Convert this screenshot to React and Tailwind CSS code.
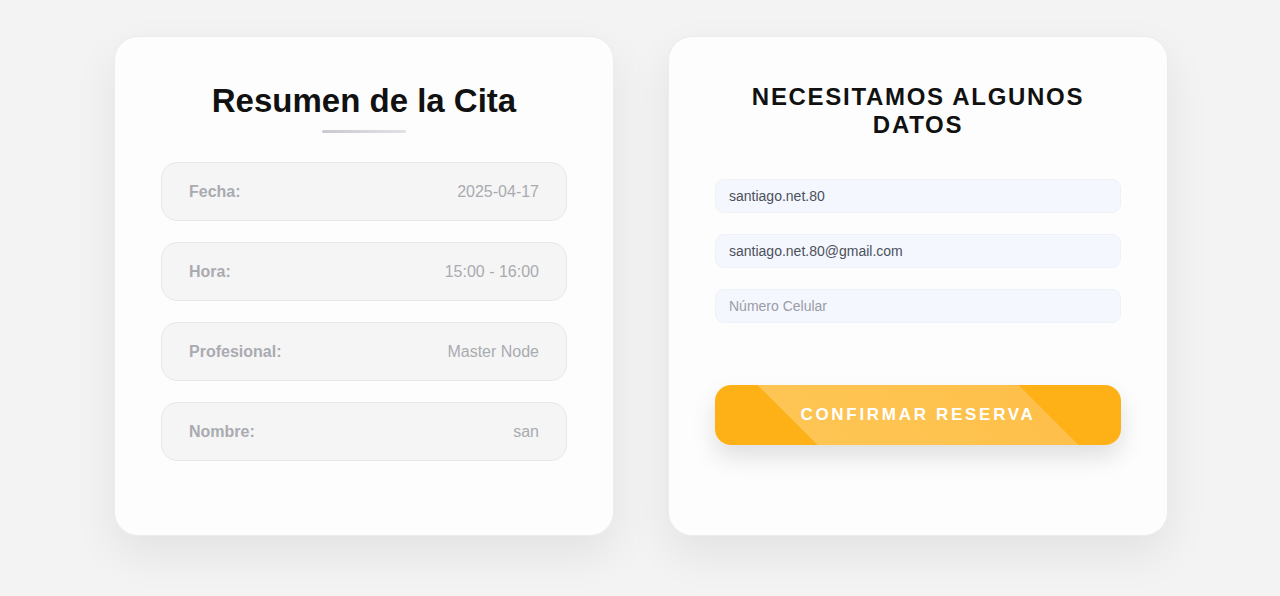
export default function App() {
  const rows = [
    ['Fecha:', '2025-04-17'],
    ['Hora:', '15:00 - 16:00'],
    ['Profesional:', 'Master Node'],
    ['Nombre:', 'san'],
  ];

  return (
    <div
      className="min-h-screen w-full bg-[#f3f3f4] flex justify-center gap-[54px] pt-9 pl-[2px]"
      style={{ fontFamily: '"Liberation Sans", Arial, sans-serif' }}
    >
      {/* RESUMEN */}
      <div className="w-[500px] h-[500px] rounded-[24px] bg-[#fdfdfd] border border-[#ececee] shadow-[0_18px_45px_rgba(0,0,0,0.07)] px-[46px] pt-[44px]">
        <h1 className="text-center text-[33px] leading-10 font-bold text-[#111]">Resumen de la Cita</h1>
        <div className="mx-auto mt-[9px] h-[3px] w-[84px] rounded-full bg-gradient-to-r from-[#c9c9d2] to-[#e2e2e6]" />

        <div className="mt-[29px] flex flex-col gap-[21px]">
          {rows.map(([label, value]) => (
            <div
              key={label}
              className="h-[59px] rounded-[16px] bg-[#f5f5f6] border border-[#e8e8ea] flex items-center justify-between px-[27px]"
            >
              <span className="text-base font-bold text-[#a9abb0]">{label}</span>
              <span className="text-base text-[#a9abaf]">{value}</span>
            </div>
          ))}
        </div>
      </div>

      {/* DATOS */}
      <div className="w-[500px] h-[500px] rounded-[24px] bg-[#fdfdfd] border border-[#ececee] shadow-[0_18px_45px_rgba(0,0,0,0.07)] px-[46px] pt-[46px]">
        <h2 className="text-center text-[24px] leading-7 font-bold uppercase tracking-[1.7px] text-[#111]">
          Necesitamos algunos datos
        </h2>

        <div className="mt-[40px] flex flex-col gap-[21px]">
          <input
            defaultValue="santiago.net.80"
            className="h-[34px] w-full rounded-[9px] bg-[#f4f7fe] border border-[#eef1f8] px-[13px] text-sm text-[#4b505a] outline-none"
          />
          <input
            defaultValue="santiago.net.80@gmail.com"
            className="h-[34px] w-full rounded-[9px] bg-[#f4f7fe] border border-[#eef1f8] px-[13px] text-sm text-[#4b505a] outline-none"
          />
          <input
            placeholder="Número Celular"
            className="h-[34px] w-full rounded-[9px] bg-[#f4f7fe] border border-[#eef1f8] px-[13px] text-sm text-[#4b505a] placeholder:text-[#9a9ca6] outline-none"
          />
        </div>

        <button className="mt-[62px] h-[60px] w-full rounded-[16px] bg-[linear-gradient(45deg,#fdb116_22%,#fec554_22%,#fec04a_78%,#fdb116_78%)] shadow-[0_12px_24px_rgba(0,0,0,0.12)] text-white text-[17px] font-bold uppercase tracking-[2.7px]">
          Confirmar reserva
        </button>
      </div>
    </div>
  );
}
